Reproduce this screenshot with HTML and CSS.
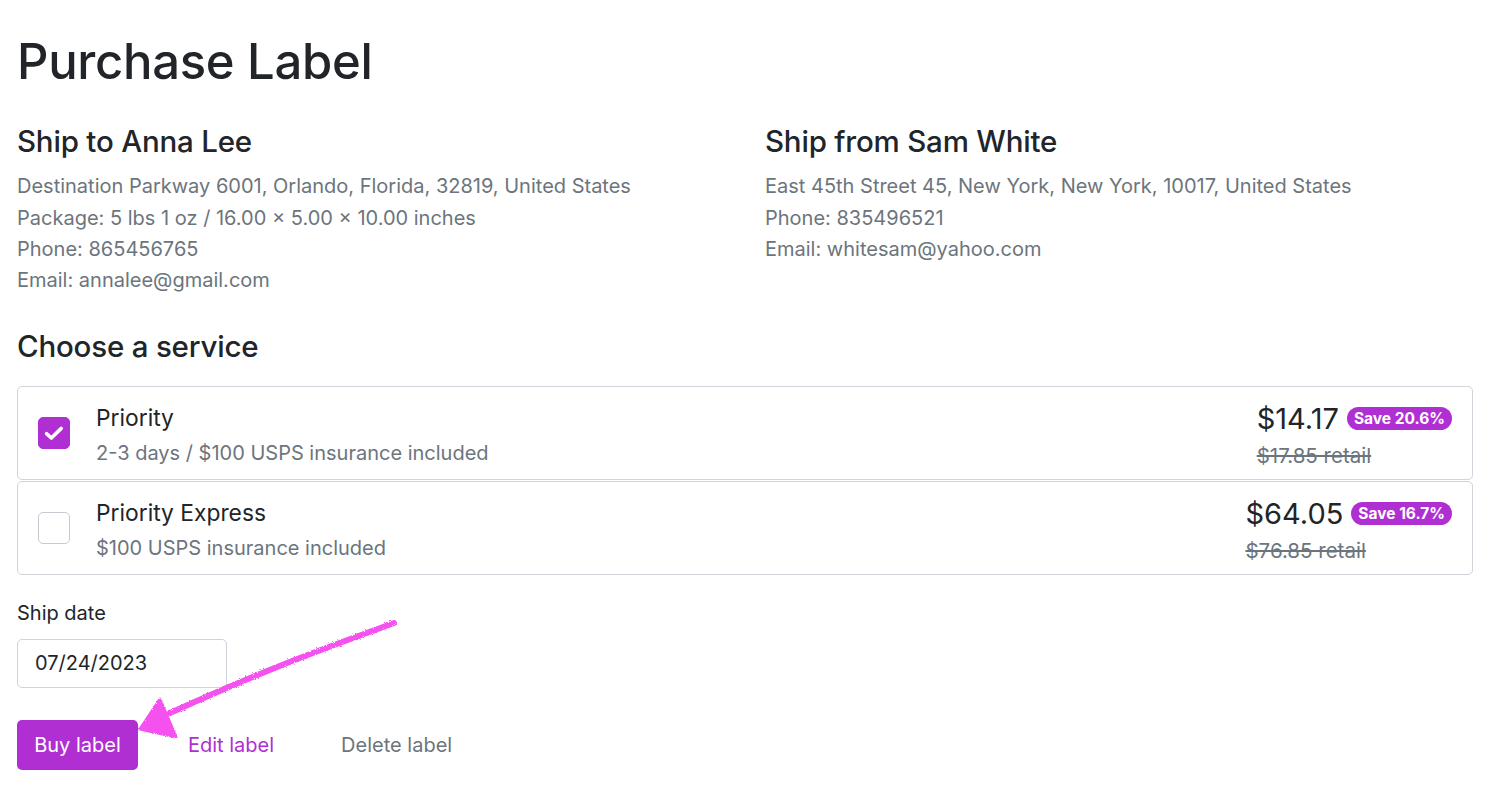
FILE: index.html
```html
<!DOCTYPE html>
<html>
<head>
<meta charset="utf-8">
<link rel="stylesheet" href="styles.css">
</head>
<body>
<div class="page">
  <h1 class="title">Purchase Label</h1>
  <div class="addresses">
    <div class="addr">
      <h2 class="addr-title">Ship to Anna Lee</h2>
      <p class="muted">Destination Parkway 6001, Orlando, Florida, 32819, United States</p>
      <p class="muted">Package: 5 lbs 1 oz / 16.00 × 5.00 × 10.00 inches</p>
      <p class="muted">Phone: 865456765</p>
      <p class="muted">Email: annalee@gmail.com</p>
    </div>
    <div class="addr">
      <h2 class="addr-title">Ship from Sam White</h2>
      <p class="muted">East 45th Street 45, New York, New York, 10017, United States</p>
      <p class="muted">Phone: 835496521</p>
      <p class="muted">Email: whitesam@yahoo.com</p>
    </div>
  </div>

  <h2 class="section-title">Choose a service</h2>
  <div class="services">
    <div class="service">
      <span class="check checked">
        <svg viewBox="0 0 20 20" width="22" height="22"><path d="M3.2 10.6 L7.6 14.6 L16.6 5.8" fill="none" stroke="#fff" stroke-width="3.2" stroke-linecap="round" stroke-linejoin="round"/></svg>
      </span>
      <div class="service-info">
        <div class="service-name">Priority</div>
        <div class="service-desc">2-3 days / $100 USPS insurance included</div>
      </div>
      <div class="price">
        <div class="price-main"><span class="amount">$14.17</span><span class="badge">Save 20.6%</span></div>
        <div class="retail">$17.85 retail</div>
      </div>
    </div>
    <div class="service">
      <span class="check"></span>
      <div class="service-info">
        <div class="service-name">Priority Express</div>
        <div class="service-desc">$100 USPS insurance included</div>
      </div>
      <div class="price">
        <div class="price-main"><span class="amount">$64.05</span><span class="badge">Save 16.7%</span></div>
        <div class="retail">$76.85 retail</div>
      </div>
    </div>
  </div>

  <label class="field-label">Ship date</label>
  <div class="date-input">07/24/2023</div>

  <div class="actions">
    <button class="btn-primary">Buy label</button>
    <a class="link-edit">Edit label</a>
    <a class="link-delete">Delete label</a>
  </div>

  <svg class="arrow" width="300" height="150" viewBox="0 0 300 150">
    <defs>
      <filter id="rough" x="-10%" y="-10%" width="120%" height="120%">
        <feTurbulence type="fractalNoise" baseFrequency="0.9" numOctaves="2" result="n"/>
        <feDisplacementMap in="SourceGraphic" in2="n" scale="3"/>
      </filter>
    </defs>
    <g filter="url(#rough)" stroke="#f551ef" fill="#f551ef" stroke-linecap="round" stroke-linejoin="round">
      <path d="M274 18 C220 38 160 58 50 108" fill="none" stroke-width="6"/>
      <path d="M40 94 L20 124 L56 132 Z" stroke-width="3"/>
    </g>
  </svg>
</div>
</body>
</html>
```

FILE: styles.css
```css
* { box-sizing: border-box; }
body {
  margin: 0;
  background: #fff;
  font-family: Inter, "Noto Sans", "Liberation Sans", sans-serif;
  color: #212529;
}
.page {
  position: relative;
  padding: 33px 27px 20px 17px;
}
.title {
  margin: 0 0 32px 0;
  font-size: 49px;
  font-weight: 500;
  line-height: 1.2;
  letter-spacing: -0.3px;
}
.addresses {
  display: grid;
  grid-template-columns: 1fr 1fr;
  column-gap: 40px;
}
.addr-title, .section-title {
  margin: 0 0 12px 0;
  font-size: 29.5px;
  font-weight: 500;
  line-height: 35.4px;
  letter-spacing: -0.2px;
}
.muted {
  margin: 0;
  color: #6c757d;
  font-size: 20px;
  line-height: 31.3px;
}
.section-title {
  margin-top: 33px;
  margin-bottom: 21px;
}
.services {
  display: flex;
  flex-direction: column;
  gap: 1px;
}
.service {
  display: flex;
  align-items: center;
  height: 94px;
  border: 1px solid #ced4da;
  border-radius: 5px;
  padding: 0 20px 0 20px;
}
.check {
  flex: none;
  width: 32px;
  height: 32px;
  border: 1px solid #c5cad0;
  border-radius: 5px;
  margin-right: 26px;
  display: flex;
  align-items: center;
  justify-content: center;
  background: #fff;
}
.check.checked {
  background: #b02fd2;
  border-color: #b02fd2;
}
.service-info { flex: 1; padding-top: 4px; }
.service-name {
  font-size: 22.8px;
  line-height: 30px;
  margin-bottom: 6px;
}
.service-desc {
  font-size: 20px;
  line-height: 28px;
  color: #6c757d;
}
.price { display: flex; flex-direction: column; align-items: flex-start; margin-top: 6px; }
.price-main { display: flex; align-items: center; }
.amount {
  font-size: 29px;
  line-height: 34px;
  margin-right: 8px;
}
.badge {
  background: #b02fd2;
  color: #fff;
  font-size: 15.5px;
  font-weight: 700;
  line-height: 23px;
  padding: 0 7px;
  border-radius: 12px;
}
.retail {
  margin-top: 6px;
  font-size: 20.5px;
  line-height: 28px;
  color: #6c757d;
  text-decoration: line-through;
}
.field-label {
  display: block;
  margin-top: 24px;
  font-size: 20px;
  line-height: 28px;
  margin-bottom: 12px;
}
.date-input {
  width: 210px;
  height: 49px;
  border: 1px solid #ced4da;
  border-radius: 5px;
  padding: 0 17px;
  display: flex;
  align-items: center;
  font-size: 20px;
  color: #212529;
}
.actions {
  display: flex;
  align-items: center;
  margin-top: 32px;
}
.btn-primary {
  height: 50px;
  width: 121px;
  border: none;
  border-radius: 5px;
  background: #b02fd2;
  color: #fff;
  font-family: inherit;
  font-size: 20px;
  margin-right: 50px;
}
.link-edit {
  color: #b02fd2;
  font-size: 20px;
  margin-right: 67px;
}
.link-delete {
  color: #6c757d;
  font-size: 20px;
}
.arrow {
  position: absolute;
  left: 120px;
  top: 605px;
}
```
